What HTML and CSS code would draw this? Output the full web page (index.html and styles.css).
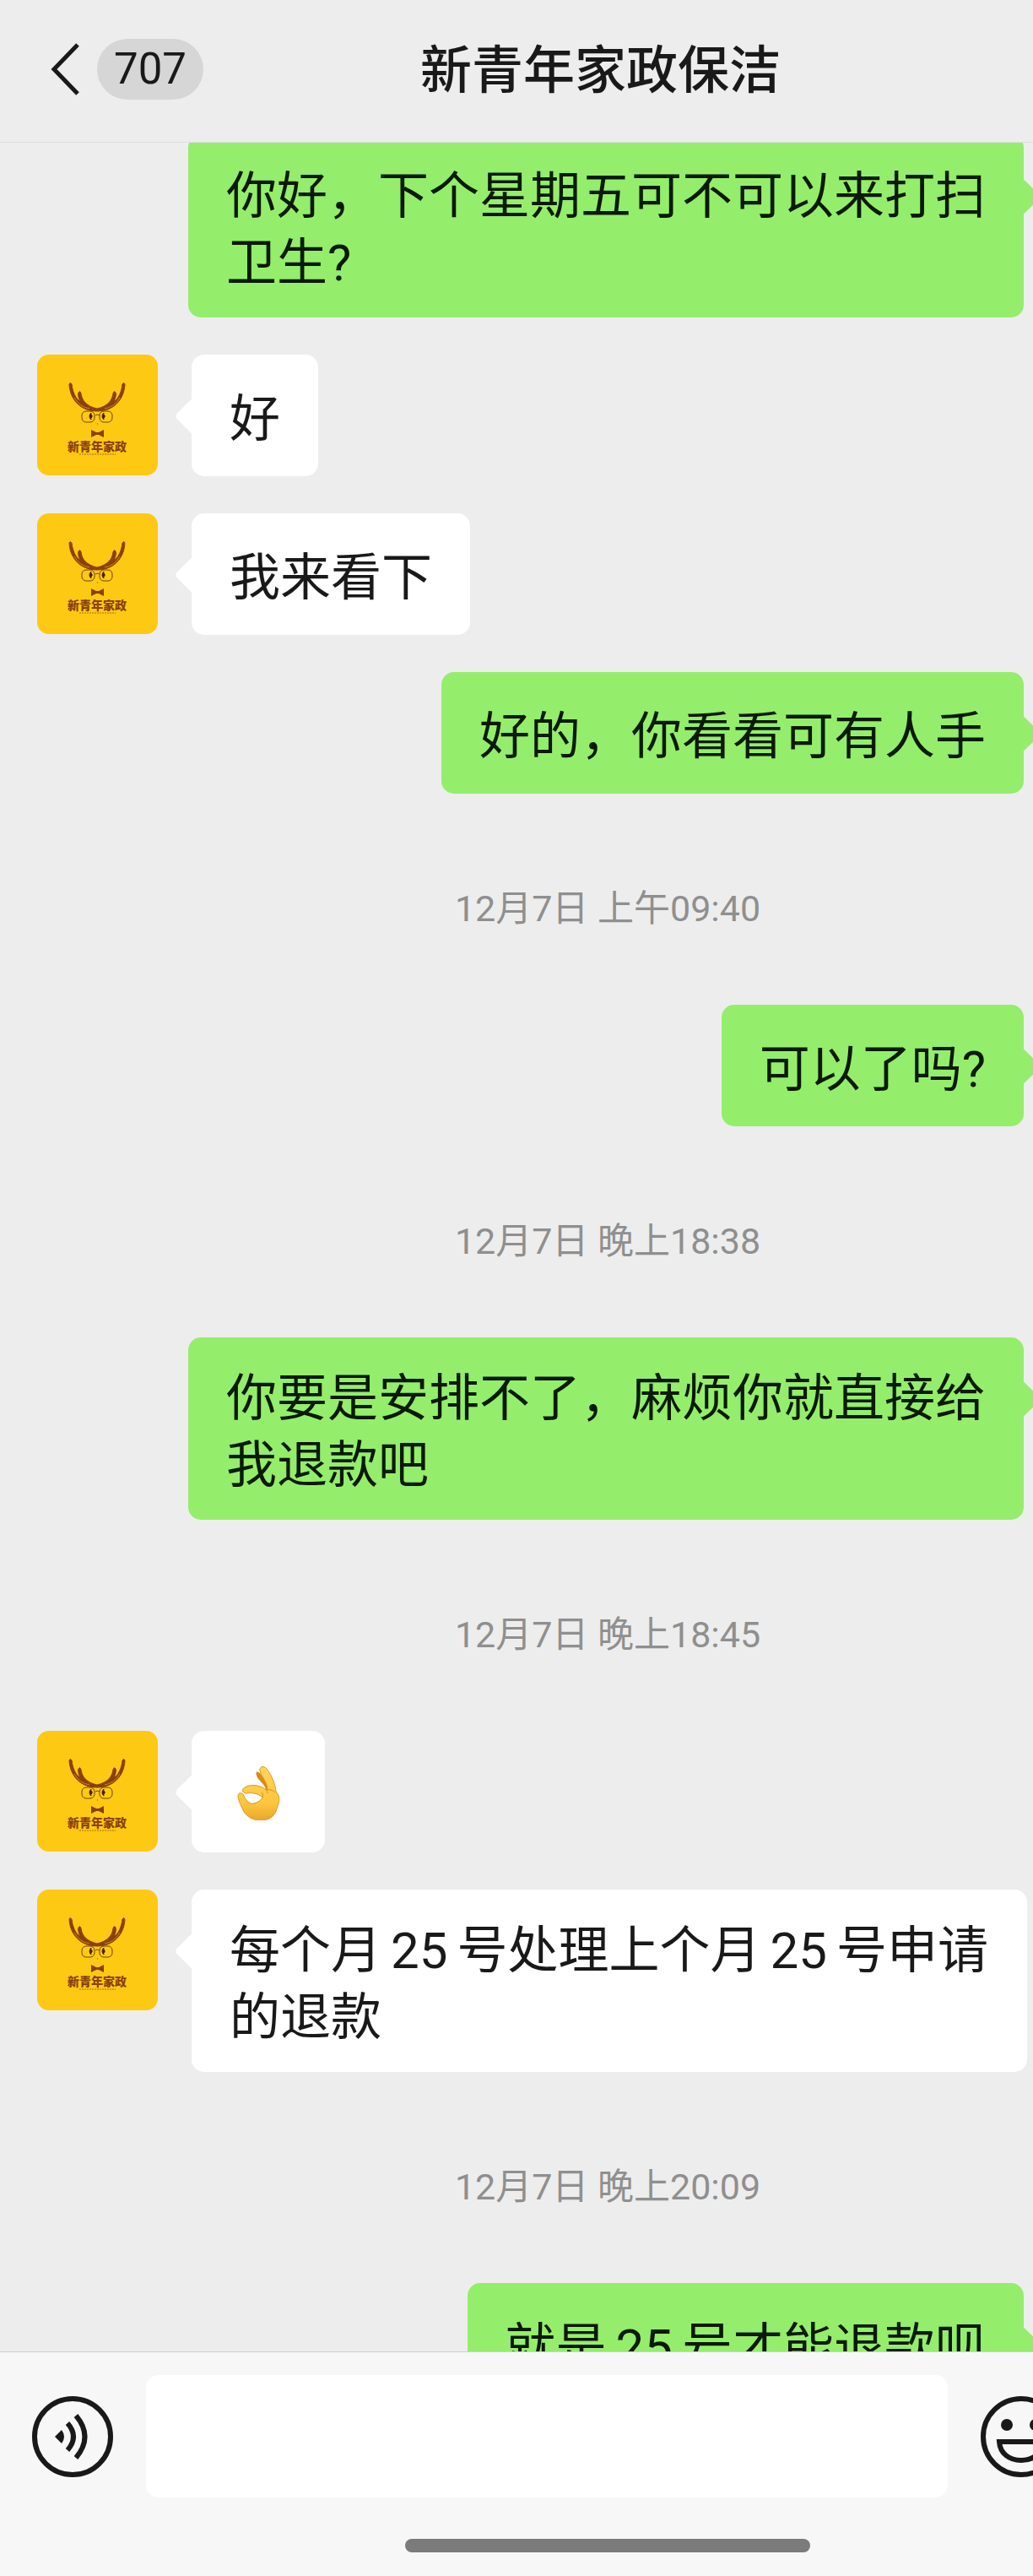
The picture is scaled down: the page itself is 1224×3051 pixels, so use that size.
FILE: index.html
```
<!DOCTYPE html>
<html lang="zh-CN">
<head>
    <meta charset="UTF-8">
    <meta name="viewport" content="width=device-width, initial-scale=1.0">
    <title>新青年家政保洁</title>
    <link rel="stylesheet" href="styles.css">
</head>
<body>
    <!-- shared avatar artwork -->
    <svg class="sprite" aria-hidden="true">
        <symbol id="avatar" viewBox="0 0 143 143">
            <rect width="143" height="143" fill="#fdc913"/>
            <g fill="#8a4108" stroke="#8a4108" stroke-width="1" stroke-linejoin="round">
                <path d="M38 35Q39 32 41 35C42 45 46 52 51 56C49 51 48 47 49 45Q51 42 52 46C53 54 58 61 71 64C84 61 89 54 90 46Q91 42 93 45C94 47 93 51 91 56C96 52 100 45 101 35Q103 32 104 35C103 54 90 67 71 67S39 54 38 35Z"/>
            </g>
            <path d="M44 51Q50 62 62 64M98 51Q92 62 80 64" fill="none" stroke="#c98a10" stroke-width="1"/>
            <g fill="none" stroke="#6b4a0a" stroke-width="1">
                <rect x="53" y="67" width="15" height="13" rx="5"/>
                <rect x="74" y="67" width="15" height="13" rx="5"/>
                <path d="M69 72q2-2 5 0M71 82h1"/>
            </g>
            <path d="M64 69q-4 4 0 8q-1-2 1-3v-2q-2-1-1-3zM79 69q-4 4 0 8q-1-2 1-3v-2q-2-1-1-3z" fill="#4a1d05" stroke="#4a1d05"/>
            <path d="M64 89l6 3h3l6-3v9l-6-3h-3l-6 3z" fill="#8a4108"/>
            <text x="71" y="114" class="avatar-name">新青年家政</text>
            <path d="M50 118H93" stroke="#a8720c" stroke-width="1" stroke-dasharray="2 1"/>
        </symbol>
    </svg>

    <div class="chat">
        <header class="chat-header">
            <button class="back" type="button" aria-label="返回">
                <svg width="36" height="64" viewBox="0 0 36 64" fill="none" stroke="#191919" stroke-width="5" aria-hidden="true">
                    <path d="M33 3L5 32L33 61"/>
                </svg>
                <span class="unread">707</span>
            </button>
            <h1 class="chat-title">新青年家政保洁</h1>
        </header>

        <main class="messages">
            <div class="message-list">
                <div class="message sent">
                    <div class="bubble"><p>你好，下个星期五可不可以来打扫卫生?</p></div>
                </div>
                <div class="message received">
                    <svg class="avatar" role="img" aria-label="头像"><use href="#avatar"/></svg>
                    <div class="bubble"><p>好</p></div>
                </div>
                <div class="message received">
                    <svg class="avatar" role="img" aria-label="头像"><use href="#avatar"/></svg>
                    <div class="bubble"><p>我来看下</p></div>
                </div>
                <div class="message sent">
                    <div class="bubble"><p>好的，你看看可有人手</p></div>
                </div>

                <time class="timestamp">12月7日 上午09:40</time>
                <div class="message sent">
                    <div class="bubble"><p>可以了吗?</p></div>
                </div>

                <time class="timestamp">12月7日 晚上18:38</time>
                <div class="message sent">
                    <div class="bubble"><p>你要是安排不了，麻烦你就直接给我退款吧</p></div>
                </div>

                <time class="timestamp">12月7日 晚上18:45</time>
                <div class="message received">
                    <svg class="avatar" role="img" aria-label="头像"><use href="#avatar"/></svg>
                    <div class="bubble">
                        <svg class="emoji" viewBox="0 0 68 68" role="img" aria-label="OK">
                            <defs>
                                <linearGradient id="skin" x1="0" y1="0" x2="0" y2="1">
                                    <stop offset="0" stop-color="#ffd65c"/>
                                    <stop offset="0.7" stop-color="#fcc53c"/>
                                    <stop offset="1" stop-color="#eba62b"/>
                                </linearGradient>
                            </defs>
                            <path d="M32 15C30 10 33 9 37 13L50 32L43 31C41 24 33 20 32 15Z" fill="#d98a1c"/>
                            <path d="M36 9C35 4 41 3 44 7C50 15 54 24 55 34C60 40 60 44 56 54C54 63 47 68 37 68C28 68 20 64 16 56C13 49 10 44 10 39C10 35 15 34 17 39C18 42 21 46 25 48C30 49 37 45 39 41C34 36 27 35 20 36C15 36 14 31 18 29C24 25 36 26 42 31L45 32C45 23 38 17 36 9Z" fill="url(#skin)" stroke="#dd9726" stroke-width="1"/>
                            <path d="M45 32C49 31 52 33 54 35M39 41C40 38 39 36 38 35M42 31C44 32 45 34 45 36" fill="none" stroke="#d98a1c" stroke-width="1"/>
                        </svg>
                    </div>
                </div>
                <div class="message received">
                    <svg class="avatar" role="img" aria-label="头像"><use href="#avatar"/></svg>
                    <div class="bubble"><p>每个月<span class="num">25</span>号处理上个月<span class="num">25</span>号申请的退款</p></div>
                </div>

                <time class="timestamp">12月7日 晚上20:09</time>
                <div class="message sent">
                    <div class="bubble"><p>就是<span class="num">25</span>号才能退款呗</p></div>
                </div>
            </div>
        </main>

        <footer class="chat-footer">
            <form class="composer">
                <button class="icon-button" type="button" aria-label="语音">
                    <svg viewBox="0 0 96 96" fill="none" stroke="#191919" stroke-width="6" aria-hidden="true">
                        <circle cx="48" cy="48" r="45"/>
                        <path d="M27 48L35 40Q41 48 35 56Z" fill="#191919" stroke="none"/>
                        <path d="M42 32Q56 48 42 64M52 23Q73 48 52 73"/>
                    </svg>
                </button>
                <input class="message-input" type="text" aria-label="消息">
                <button class="icon-button" type="button" aria-label="表情">
                    <svg viewBox="0 0 96 96" fill="none" stroke="#191919" stroke-width="6" aria-hidden="true">
                        <circle cx="48" cy="48" r="45"/>
                        <circle cx="31" cy="34" r="7" fill="#191919" stroke="none"/>
                        <circle cx="65" cy="34" r="7" fill="#191919" stroke="none"/>
                        <path d="M22 54H74C73 68 62 76 48 76S23 68 22 54Z"/>
                    </svg>
                </button>
            </form>
            <div class="home-indicator"></div>
        </footer>
    </div>
</body>
</html>
```
FILE: styles.css
```
* {
    box-sizing: border-box;
}

body {
    margin: 0;
    overflow: hidden;
    background-color: #ededed;
    color: #191919;
    font-family: Roboto, "Noto Sans CJK SC", sans-serif;
}

button {
    padding: 0;
    border: none;
    background: none;
    color: inherit;
    font-family: inherit;
    cursor: pointer;
}

.sprite {
    display: none;
}

/* the chat is wider than the window and runs off its right side */
.chat {
    display: flex;
    flex-direction: column;
    height: 100vh;
    margin-right: -216px;
}

.chat-header {
    display: grid;
    grid-template-columns: 1fr auto 1fr;
    align-items: center;
    height: 169px;
    padding: 0 76px 4px 59px;
    border-bottom: 1px solid #dedede;
}

.back {
    display: flex;
    align-items: center;
    gap: 20px;
}

.unread {
    padding: 0 20px;
    border-radius: 36px;
    background-color: #d6d6d6;
    font-size: 51px;
    line-height: 72px;
}

.chat-title {
    margin: 0;
    padding-top: 4px;
    font-size: 61px;
    font-weight: 500;
    line-height: 80px;
}

.messages {
    flex: 1;
    min-height: 0;
    overflow: hidden;
}

.message-list {
    display: flex;
    flex-direction: column;
    gap: 44px;
    margin-top: -9px;
    padding: 0 223px 0 44px;
}

.message {
    display: flex;
    align-items: flex-start;
    gap: 40px;
}

.sent {
    justify-content: flex-end;
    padding-right: 4px;
}

.avatar {
    flex: none;
    width: 143px;
    height: 143px;
    border-radius: 14px;
}

.avatar-name {
    fill: #8a4108;
    font-size: 14px;
    font-weight: 900;
    text-anchor: middle;
}

.bubble {
    position: relative;
    display: flex;
    align-items: center;
    max-width: 990px;
    min-height: 144px;
    padding: 33px 45px 25px;
    border-radius: 15px;
    background-color: #fff;
    font-size: 60px;
    line-height: 79px;
}

.bubble p {
    margin: 0;
}

.bubble::before {
    content: "";
    position: absolute;
    top: 57px;
    left: -14px;
    width: 32px;
    height: 32px;
    border-radius: 5px;
    background-color: inherit;
    transform: rotate(45deg);
}

.sent .bubble {
    background-color: #95ed6c;
    color: #081a04;
}

.sent .bubble::before {
    right: -14px;
    left: auto;
}

.num {
    margin: 0 11px;
}

.emoji {
    display: block;
    width: 68px;
    height: 68px;
    margin-bottom: 8px;
}

.timestamp {
    padding: 62px 0 40px;
    color: #8f8f8f;
    font-size: 43px;
    line-height: 60px;
    text-align: center;
}

/* centred on the screen, not on the padded list */
.message-list .timestamp {
    margin: 0 -223px 0 -44px;
}

.chat-footer {
    padding: 27px 0 28px;
    border-top: 1px solid #cfcfcf;
    background-color: #f7f7f7;
}

.composer {
    display: flex;
    align-items: center;
    gap: 39px;
    padding: 0 182px 0 38px;
}

.icon-button,
.icon-button svg {
    display: block;
    flex: none;
    width: 96px;
    height: 96px;
}

.message-input {
    flex: 1;
    min-width: 0;
    height: 145px;
    padding: 0 30px;
    border: none;
    border-radius: 15px;
    background-color: #fff;
    font-family: inherit;
    font-size: 60px;
}

.home-indicator {
    width: 480px;
    height: 16px;
    margin: 49px auto 0;
    border-radius: 8px;
    background-color: #7b7b7b;
}
```
